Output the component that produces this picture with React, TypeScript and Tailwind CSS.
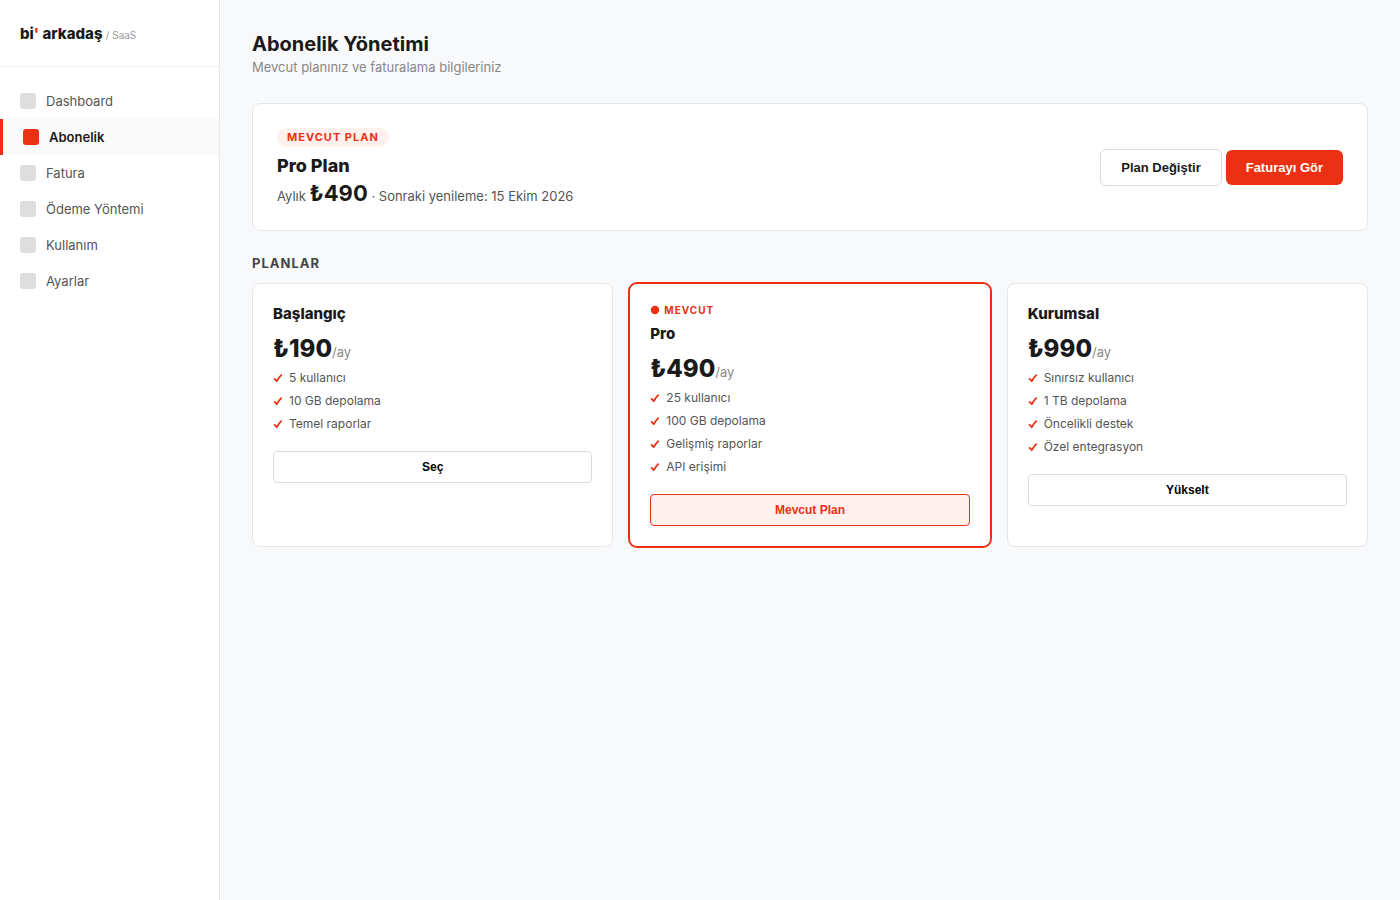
import clsx from "clsx";

type Plan = {
  name: string;
  price: string;
  features: string[];
  action: string;
  current?: boolean;
};

const navItems = ["Dashboard", "Abonelik", "Fatura", "Ödeme Yöntemi", "Kullanım", "Ayarlar"];
const activeItem = "Abonelik";

const plans: Plan[] = [
  {
    name: "Başlangıç",
    price: "₺190",
    features: ["5 kullanıcı", "10 GB depolama", "Temel raporlar"],
    action: "Seç",
  },
  {
    name: "Pro",
    price: "₺490",
    features: ["25 kullanıcı", "100 GB depolama", "Gelişmiş raporlar", "API erişimi"],
    action: "Mevcut Plan",
    current: true,
  },
  {
    name: "Kurumsal",
    price: "₺990",
    features: ["Sınırsız kullanıcı", "1 TB depolama", "Öncelikli destek", "Özel entegrasyon"],
    action: "Yükselt",
  },
];

function CheckIcon() {
  return (
    <svg viewBox="0 0 10 10" className="size-2.5 shrink-0" fill="none" aria-hidden="true">
      <path
        d="M1.6 5.9 3.8 8.2Q5.4 4.8 8.3 2.2"
        stroke="#ec3013"
        strokeWidth="1.8"
        strokeLinecap="round"
        strokeLinejoin="round"
      />
    </svg>
  );
}

function Sidebar() {
  return (
    <aside className="w-[220px] shrink-0 border-r border-[#e5e7eb] bg-white">
      <div className="border-b border-[#eeeeee] px-5 pt-[25px] pb-[23px] text-[15px] leading-[18px] font-extrabold text-[#1a1a1a]">
        bi<span className="text-[#ec3013]">'</span> arkadaş{" "}
        <span className="text-[10px] leading-none font-normal text-[#999999]">/ SaaS</span>
      </div>
      <nav className="flex flex-col py-4">
        {navItems.map((item) => {
          const active = item === activeItem;
          return (
            <a
              key={item}
              href="#"
              aria-current={active ? "page" : undefined}
              className={clsx(
                "flex h-9 items-center gap-2.5 px-5 text-[13px] leading-5",
                active ? "border-l-3 border-[#ec3013] bg-[#fafafa] font-semibold text-[#1a1a1a]" : "text-[#555555]",
              )}
            >
              <span className={clsx("size-4 rounded-[3px]", active ? "bg-[#ec3013]" : "bg-[#dddddd]")} />
              {item}
            </a>
          );
        })}
      </nav>
    </aside>
  );
}

function CurrentPlan() {
  return (
    <section className="flex items-center justify-between rounded-lg border border-[#e5e7eb] bg-white p-6">
      <div>
        <span className="block w-fit rounded-full bg-[#fff1ee] px-2.5 py-[3px] text-[11px] leading-[13px] font-bold tracking-[1px] text-[#ec3013]">
          MEVCUT PLAN
        </span>
        <h2 className="mt-2 text-[18px] leading-[22px] font-extrabold">Pro Plan</h2>
        <p className="mt-1 text-[13px] leading-4 text-[#555555]">
          Aylık <strong className="text-[22px] leading-[25px] font-bold text-[#1a1a1a]">₺490</strong> · Sonraki yenileme: 15 Ekim 2026
        </p>
      </div>
      <div className="flex items-center gap-1 font-['Liberation_Sans',Arial,sans-serif] text-[13px] leading-[15px] font-semibold">
        <button type="button" className="rounded-md border border-[#dddddd] bg-white px-5 py-2.5 text-[#1a1a1a]">
          Plan Değiştir
        </button>
        <button type="button" className="rounded-md bg-[#ec3013] px-5 py-2.5 text-white">
          Faturayı Gör
        </button>
      </div>
    </section>
  );
}

function PlanCard({ plan }: { plan: Plan }) {
  return (
    <article
      className={clsx(
        "rounded-lg border bg-white p-5",
        plan.current ? "border-[#ec3013] ring-1 ring-[#ec3013]" : "border-[#e5e7eb]",
      )}
    >
      {plan.current && (
        <div className="mb-2 flex items-center gap-1 text-[10px] leading-3 font-bold tracking-[1px] text-[#ec3013]">
          <svg viewBox="0 0 10 10" className="size-2.5" aria-hidden="true">
            <circle cx="5" cy="5" r="4.2" fill="#ec3013" />
          </svg>
          MEVCUT
        </div>
      )}
      <h3 className="text-[15px] leading-5 font-extrabold">{plan.name}</h3>
      <div className="mt-2 text-[24px] leading-[34px] font-extrabold">
        {plan.price}
        <span className="text-[13px] leading-none font-normal text-[#888888]">/ay</span>
      </div>
      <ul className="mb-4">
        {plan.features.map((feature) => (
          <li key={feature} className="flex items-center gap-1.5 py-1 text-[12px] leading-[15px] text-[#555555]">
            <CheckIcon />
            {feature}
          </li>
        ))}
      </ul>
      <button
        type="button"
        className={clsx(
          "w-full rounded border px-2 py-2 font-['Liberation_Sans',Arial,sans-serif] text-[12px] leading-[14px] font-semibold",
          plan.current ? "border-[#ec3013] bg-[#fff1ee] text-[#ec3013]" : "border-[#dddddd] bg-white text-black",
        )}
      >
        {plan.action}
      </button>
    </article>
  );
}

export default function App() {
  return (
    <div className="flex min-h-screen bg-[#f8f9fb] font-[Inter,sans-serif] text-[#1a1a1a]">
      <Sidebar />
      <main className="min-w-0 flex-1 p-8">
        <h1 className="text-[20px] leading-6 font-bold">Abonelik Yönetimi</h1>
        <p className="mt-1 mb-7 text-[13px] leading-[15px] text-[#888888]">Mevcut planınız ve faturalama bilgileriniz</p>
        <CurrentPlan />
        <h2 className="mt-6 mb-3 text-[13px] leading-4 font-bold tracking-[1px] text-[#444444]">PLANLAR</h2>
        <div className="grid grid-cols-3 gap-4">
          {plans.map((plan) => (
            <PlanCard key={plan.name} plan={plan} />
          ))}
        </div>
      </main>
    </div>
  );
}
